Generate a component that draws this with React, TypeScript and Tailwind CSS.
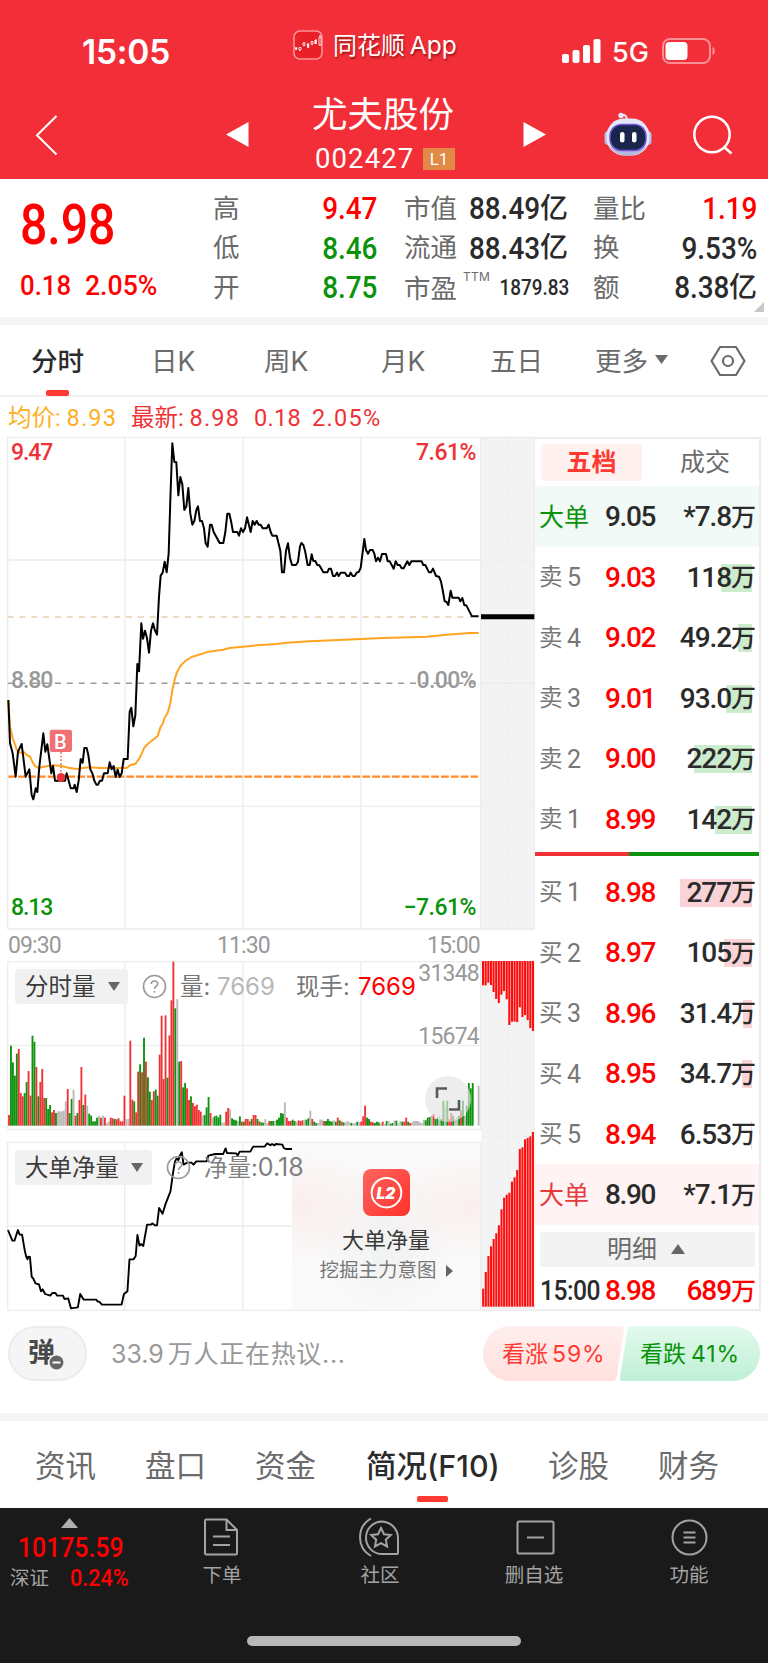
import { clsx } from 'clsx';

const PRICE_LINE =
  '25,810 27,860 30,940 38,970 47,1040 54,965 65,942 77,1040 88,1018 95,1095 100,1108 107,1075 112,1086 118,1010 130,910 136,965 142,943 154,1030 159,1008 165,1052 195,1052 200,1030 212,1075 221,1075 224,1064 230,1086 236,1052 242,987 248,998 253,954 260,954 265,975 271,1018 277,1030 283,1052 289,1064 294,1064 300,1052 306,1052 312,1030 323,1030 329,997 335,1018 341,1008 347,1041 353,1019 359,1041 365,1030 371,987 383,987 389,845 394,833 400,889 406,856 412,702 417,724 424,580 429,626 435,602 441,624 447,668 453,602 459,580 465,602 471,614 477,500 482,437 488,428 494,395 500,427 506,370 512,180 517,40 523,96 529,97 535,196 541,141 547,163 553,240 559,229 565,174 571,251 577,284 583,273 589,240 594,229 600,273 606,273 612,295 617,340 623,350 630,284 635,284 641,306 659,339 670,339 676,306 682,251 688,251 693,273 699,306 712,306 717,317 723,295 729,306 735,295 741,262 752,306 758,273 764,284 770,273 776,284 782,284 788,295 800,295 806,284 812,306 817,317 830,317 841,362 846,427 852,427 858,362 864,340 870,384 876,405 888,405 894,395 900,349 904,339 910,345 915,362 923,405 929,405 935,373 940,393 946,393 952,405 958,406 970,427 982,427 987,416 993,416 999,438 1005,438 1011,428 1016,438 1022,428 1035,428 1041,438 1047,438 1052,428 1058,438 1064,438 1070,428 1076,426 1082,414 1093,327 1098,360 1104,371 1110,360 1118,360 1123,371 1128,394 1134,383 1140,394 1146,372 1158,372 1163,394 1169,394 1181,416 1187,394 1193,405 1199,405 1205,415 1211,415 1222,394 1228,405 1234,394 1265,394 1270,405 1276,405 1287,427 1293,427 1299,416 1308,438 1317,440 1323,455 1328,480 1334,514 1339,515 1345,525 1352,482 1357,503 1376,503 1381,514 1387,504 1393,526 1399,526 1416,559 1436,559';

const AVG_LINE =
  '25,810 30,890 38,925 46,945 50,960 60,968 73,967 80,975 90,980 98,997 105,1008 115,1014 130,1010 160,1006 185,1008 205,1013 230,1017 265,1012 300,1014 380,1014 390,1006 407,1001 420,982 433,953 442,943 465,925 473,918 482,890 488,882 494,863 503,848 511,820 518,775 524,750 530,728 542,707 556,693 575,681 610,670 625,665 670,659 688,654 730,650 770,646 830,642 860,638 930,634 1083,627 1150,624 1280,620 1340,614 1410,609 1436,609';

const NET_LINE =
  '23,300 36,332 42,332 52,300 57,314 64,314 72,362 76,380 80,388 82,380 87,381 92,440 98,448 103,460 113,463 119,484 124,478 131,492 146,497 152,489 161,489 166,497 183,497 187,507 198,505 206,535 226,532 233,492 243,509 279,509 284,515 288,515 296,524 353,524 360,492 370,484 376,388 388,388 394,378 399,315 405,347 409,342 416,348 427,284 438,284 443,280 450,286 456,286 462,234 472,251 480,224 495,184 503,125 508,95 513,85 518,90 523,75 528,67 533,104 543,98 556,98 562,104 570,94 600,94 605,77 625,72 648,72 655,55 659,69 686,70 690,77 696,65 727,65 735,50 768,50 776,40 785,46 790,42 797,46 801,42 820,44 824,54 830,57 848,57';

// one entry per minute: r = up, g = down, a = flat, followed by the bar height
const VOLUME =
  'r32 g240 g190 g150 g216 r230 r98 r88 g98 g131 r164 r90 g270 g252 r176 g88 r131 r170 r83 g83 g50 g62 r40 r47 g38 a43 a43 a43 a45 a73 r110 g38 g80 a108 r30 g38 r77 r176 g62 r93 a60 g36 g30 g13 g13 g24 a30 r24 a30 r24 a8 a13 r24 r22 g20 r19 r22 r13 r13 r90 a20 a20 r255 r78 g73 r40 r162 g184 r160 g264 r192 g145 g102 r77 r103 g108 g90 r213 r330 r140 r331 g144 r271 r376 r492 g352 a380 g192 r194 g115 g128 r112 r77 g88 r68 r58 r63 r47 r42 a30 g32 g55 g86 r38 a24 g28 g30 g25 g33 a8 a10 r42 r53 a50 g22 g18 g16 a14 g28 r12 g12 r20 r20 r13 g20 r32 r32 g20 r13 g10 g9 a20 a8 r14 g14 g14 a14 g18 g24 g38 g36 a70 r24 r14 r14 g18 g14 a12 r16 r14 r16 a18 g18 g22 a45 r20 g12 g8 a8 a18 a18 r14 g14 g20 g14 g12 a16 g12 r24 g16 r12 g10 a10 a14 a10 g8 a8 a8 g12 a10 r12 r28 r60 g24 g20 r12 r10 g8 g12 g10 a6 r12 a5 g14 a14 g6 g8 a15 g15 a6 a14 g12 r12 r24 g12 r8 a10 a14 a14 a14 a10 a8 a18 g16 g24 g26 a30 r35 g20 g24 a30 g20 g75 a60 g75 r20 r38 g30 a20 a25 g30 r45 g75 a30 g60 g128 g112 g128 a0 a0 a120';

const VOLUME_COLORS: Record<string, string> = { r: '#ee3236', g: '#0f930f', a: '#b9b9b9' };

const AUCTION_TOP = [256, 256, 248, 255, 276, 297, 309, 284, 273, 298, 375, 365, 365, 366, 322, 351, 345, 360, 384, 393];
const AUCTION_NET = [476, 426, 378, 349, 327, 310, 286, 238, 203, 194, 188, 155, 142, 120, 57, 52, 28, 24, 19, 6];

const SELLS = [
  { label: '卖', level: '5', price: '9.03', volume: '118', bar: 31 },
  { label: '卖', level: '4', price: '9.02', volume: '49.2', bar: 14 },
  { label: '卖', level: '3', price: '9.01', volume: '93.0', bar: 26 },
  { label: '卖', level: '2', price: '9.00', volume: '222', bar: 58 },
  { label: '卖', level: '1', price: '8.99', volume: '142', bar: 37 },
];

const BUYS = [
  { label: '买', level: '1', price: '8.98', volume: '277', bar: 72 },
  { label: '买', level: '2', price: '8.97', volume: '105', bar: 28 },
  { label: '买', level: '3', price: '8.96', volume: '31.4', bar: 9 },
  { label: '买', level: '4', price: '8.95', volume: '34.7', bar: 10 },
  { label: '买', level: '5', price: '8.94', volume: '6.53', bar: 1.5 },
];

type Level = (typeof SELLS)[number];

function Header() {
  return (
    <header className="h-[179px] bg-[#f22f38] text-white">
      {/* Status bar */}
      <div className="flex h-[89px] items-start">
        <div className="ml-[82px] mt-[34px] w-[211px] text-[33.500px] font-semibold leading-[36px] tracking-[-0.2px]">15:05</div>
        <svg className="mt-[30px] h-[30px] w-[30px]" viewBox="0 0 30 30" fill="none">
          <rect x="1" y="1" width="28" height="28" rx="6" fill="#ea2029" stroke="#fa9498" strokeWidth="1.6" />
          <path d="M3 17v3M6.800 17v4M11 12v4M15 13v5M19 11v4M23 9v5M27 5v11" stroke="white" strokeWidth="1" />
          <path d="M2.200 17.500h2v2h-2zM14 14h2.200v3.500H14zM21.500 10h2v4h-2z" fill="white" />
          <path d="M6 17.500h2v2.500H6zM10 13h2v2.500h-2zM18 11.500h2v2.500h-2zM26 7h2v8h-2z" fill="#ea2029" stroke="white" strokeWidth=".8" />
        </svg>
        <div className="ml-[10px] mt-[30px] w-[228px] shrink-0 whitespace-nowrap text-[24px] leading-[31px] [text-shadow:1px_2px_2px_rgba(90,0,0,0.55)]">
          同花顺 <span className="-ml-[2px] text-[24.500px]">App</span>
        </div>
        <svg className="mt-[38px] h-[26px] w-[40px] shrink-0" viewBox="0 0 40 26" fill="white">
          <rect x="1" y="16" width="7" height="9" rx="2" />
          <rect x="11.500" y="12" width="7" height="13" rx="2" />
          <rect x="22" y="7" width="7" height="18" rx="2" />
          <rect x="32.500" y="1" width="7" height="24" rx="2" />
        </svg>
        <div className="ml-[11px] mt-[39px] w-[50px] shrink-0 text-[27px] font-medium leading-[28px]">5G</div>
        <svg className="mt-[38px] h-[26px] w-[54px] shrink-0" viewBox="0 0 54 26" fill="none">
          <rect x="1" y="1" width="47" height="24" rx="7" stroke="#fa8f94" strokeWidth="2" />
          <rect x="3.500" y="4" width="22" height="18" rx="4" fill="white" />
          <path d="M50.500 9c3 1 3 7 0 8z" fill="#fa8f94" />
        </svg>
      </div>

      {/* Stock title */}
      <div className="flex h-[90px] items-start">
        <svg className="ml-[35px] mt-[26px] h-[40px] w-[23px]" viewBox="0 0 23 40" fill="none">
          <path d="M21.500 1 2 20.300 21.500 39.500" stroke="white" strokeWidth="2" />
        </svg>
        <svg className="ml-[167px] mt-[33px] h-[25px] w-[24px]" viewBox="0 0 24 25">
          <path d="M23.500 0v25L1 12.500z" fill="white" />
        </svg>
        <div className="ml-[63px] flex w-[144px] flex-col">
          <h1 className="mt-[7px] whitespace-nowrap text-[35.500px] font-normal leading-[38px]">尤夫股份</h1>
          <div className="mt-[11px] flex items-center">
            <span className="ml-[3px] w-[108px] font-[Roboto] text-[27.500px] leading-[28px] tracking-[1.1px]">002427</span>
            <span className="h-[22px] w-[32px] bg-[#e08a45] text-center font-[Roboto] text-[17px] leading-[22px]">L1</span>
          </div>
        </div>
        <svg className="ml-[67px] mt-[33px] h-[25px] w-[24px]" viewBox="0 0 24 25">
          <path d="M.500 0v25L23 12.500z" fill="white" />
        </svg>
        <svg className="ml-[57px] mt-[23px] h-[45px] w-[48px]" viewBox="0 0 48 45" fill="none">
          <path d="M17.500 3.500c3-1.500 5 0 5.500 4" stroke="#e8eeff" strokeWidth="2" />
          <circle cx="17" cy="3.500" r="2.700" fill="#dfe6fb" />
          <rect x=".5" y="19" width="8" height="14" rx="4" fill="#b9bdec" />
          <rect x="39.500" y="19" width="8" height="14" rx="4" fill="#b9bdec" />
          <rect x="2.500" y="6.500" width="43" height="37" rx="17.500" fill="#e4e8fa" />
          <path d="M5 33c4 8 10 10.500 19 10.500S39 41 43 33c-6 5-32 5-38 0z" fill="#b3bade" />
          <rect x="6" y="12.500" width="36" height="26" rx="11.500" fill="#17264a" stroke="#7653d8" strokeWidth="1.500" />
          <rect x="16" y="20" width="4.500" height="10.500" rx="2.200" fill="white" />
          <rect x="28" y="20" width="4.500" height="10.500" rx="2.200" fill="white" />
        </svg>
        <svg className="ml-[40px] mt-[26px] h-[42px] w-[42px]" viewBox="0 0 42 42" fill="none" stroke="white" strokeWidth="2.500">
          <circle cx="20" cy="19.500" r="17.700" />
          <path d="m32 32 7.500 6.500" />
        </svg>
      </div>
    </header>
  );
}

function StatRow({ label, value, unit, className }: { label: string; value: string; unit?: string; className?: string }) {
  return (
    <div className="flex h-[39.500px] items-center justify-between">
      <span className="text-[26.500px] leading-none text-[#6b6b6b]">{label}</span>
      <span className={clsx('flex items-center whitespace-nowrap font-medium leading-none', className)}>
        <span className="origin-right scale-x-[0.9]">{value}</span>
        {unit && <span className="text-[28px]">{unit}</span>}
      </span>
    </div>
  );
}

function Quote() {
  return (
    <section className="relative flex h-[138px] border-b border-white bg-white font-[Roboto,'Noto_Sans_CJK_SC',sans-serif] text-[31px] text-[#2b2b2b]">
      <div className="w-[213px] pl-[20px] text-[#ff0000]">
        <div className="mt-[18px] origin-left scale-x-[0.86] text-[56px] font-medium leading-[56px]">8.98</div>
        <div className="mt-[17px] flex text-[28px] font-medium leading-[32px]">
          <span className="w-[65px] origin-left scale-x-[0.92]">0.18</span>
          <span className="origin-left scale-x-[0.95]">2.05%</span>
        </div>
      </div>
      <div className="w-[164px] pt-[10px]">
        <StatRow label="高" value="9.47" className="text-[#ff0000]" />
        <StatRow label="低" value="8.46" className="text-[#0a930a]" />
        <StatRow label="开" value="8.75" className="text-[#0a930a]" />
      </div>
      <div className="ml-[27px] w-[164px] pt-[10px]">
        <StatRow label="市值" value="88.49" unit="亿" />
        <StatRow label="流通" value="88.43" unit="亿" />
        <div className="flex h-[40px] items-center whitespace-nowrap">
          <span className="mt-[3px] shrink-0 text-[26.500px] leading-none text-[#6b6b6b]">市盈</span>
          <span className="mb-[22px] ml-[6px] shrink-0 font-[Inter] text-[12px] leading-none tracking-[0.3px] text-[#6b6b6b]">TTM</span>
          <span className="ml-auto origin-right scale-x-[0.88] text-[21.500px] font-medium leading-none">1879.83</span>
        </div>
      </div>
      <div className="ml-[25px] w-[164px] pt-[10px]">
        <StatRow label="量比" value="1.19" className="text-[#ff0000]" />
        <StatRow label="换" value="9.53%" />
        <StatRow label="额" value="8.38" unit="亿" />
      </div>
      <svg className="absolute bottom-[4px] right-[4px] h-[10px] w-[10px]" viewBox="0 0 10 10">
        <path d="M10 0v10H0z" fill="#c8c8c8" />
      </svg>
    </section>
  );
}

function PeriodTabs() {
  return (
    <nav className="relative flex h-[72px] items-center border-b-2 border-[#f1f1f1] pt-[2px] text-[26.500px] leading-none text-[#6b6b6b]">
      <span className="ml-[31px] w-[120px] font-medium text-[#2b2b2b]">分时</span>
      <span className="w-[113px]">日K</span>
      <span className="w-[117px]">周K</span>
      <span className="w-[109px]">月K</span>
      <span className="w-[105px]">五日</span>
      <span className="w-[60px]">更多</span>
      <svg className="mt-[-3px] h-[9px] w-[13px]" viewBox="0 0 13 9">
        <path d="M0 0h13L6.500 9z" fill="#6b6b6b" />
      </svg>
      <svg className="mt-[-1px] ml-[42px] h-[32px] w-[36px]" viewBox="0 0 36 32" fill="none" stroke="#6b6b6b" strokeWidth="2.200">
        <path d="M10 2h16l8.500 14L26 30H10L1.500 16z" strokeLinejoin="round" />
        <circle cx="18" cy="16" r="5" />
      </svg>
      <div className="absolute bottom-[-1px] left-[46px] h-[6px] w-[23px] rounded-[2px] bg-[#ff3a33]" />
    </nav>
  );
}

function PriceChart() {
  return (
    <div className="relative h-[500px] font-[Roboto] text-[23px] font-medium leading-none">
      <svg className="h-full w-full" viewBox="0 0 1605 1500" fill="none">
        <rect x="1443" y="22" width="162" height="1476" fill="#f3f3f4" />
        <g stroke="#ececec" strokeWidth="4">
          <path d="M23 22H1605M23 390H1443M23 1129H1443M23 1497H1605" />
          <path d="M23 22V1497M375 22V1497M729 22V1497M1083 22V1497M1442 22V1497M1603 22V1497" />
        </g>
        <g stroke="#e8e8e8" strokeWidth="3">
          <path d="M1526 22V1497M1443 392H1603M1443 1131H1603" strokeDasharray="3 6" />
          <path d="M1443 760H1603" />
        </g>
        <path d="M23 561H1416" stroke="#e6cfb0" strokeWidth="4.500" strokeDasharray="18 17.500" />
        <path d="M23 760H1436" stroke="#9a9a9a" strokeWidth="4.500" strokeDasharray="18 17.500" />
        <path d="M25 1040H1434" stroke="#ff8a2b" strokeWidth="7" strokeDasharray="23.500 6" />
        <polyline points={AVG_LINE} stroke="#ffa41f" strokeWidth="6" strokeLinejoin="round" />
        <polyline points={PRICE_LINE} stroke="black" strokeWidth="6" strokeLinejoin="round" />
        <path d="M1443 560H1603" stroke="black" strokeWidth="15" />
        <path d="M183 966V1030" stroke="#f17074" strokeWidth="5" strokeDasharray="5 6" />
        <circle cx="183" cy="1042" r="13" fill="#ee3338" />
        <rect x="149" y="899" width="67" height="67" rx="7" fill="#f17074" />
      </svg>
      <span className="absolute left-[54px] top-[302px] text-[20px] text-white">B</span>
      <span className="absolute left-[11px] top-[11px] tracking-[-1.100px] text-[#ee3236]">9.47</span>
      <span className="absolute left-[11px] top-[239px] tracking-[-1.100px] text-[#999]">8.80</span>
      <span className="absolute left-[11px] top-[466px] tracking-[-1.100px] text-[#0a930a]">8.13</span>
      <span className="absolute right-[59px] top-[11px] tracking-[-0.500px] text-[#ee3236]">7.61%</span>
      <span className="absolute right-[59px] top-[239px] tracking-[-0.600px] text-[#999]">0.00%</span>
      <span className="absolute right-[59px] top-[466px] tracking-[-0.500px] text-[#0a930a]">−7.61%</span>
    </div>
  );
}

function HelpIcon({ className }: { className?: string }) {
  return (
    <svg className={clsx('h-[25px] w-[25px]', className)} viewBox="0 0 25 25" fill="none" stroke="#999" strokeWidth="1.600">
      <circle cx="12.500" cy="12.500" r="11" />
      <path d="M9.300 10c0-4 6.500-4 6.500-.3 0 2.300-3.300 2.500-3.300 5.300M12.500 17v1.800" />
    </svg>
  );
}

function IndicatorPicker({ label, className }: { label: string; className?: string }) {
  return (
    <div className={clsx('flex h-[35px] items-center rounded-[4px] bg-[#f1f1f2] pl-[10px] text-[#3c3c3c]', className)}>
      <span className="mt-[1px]">{label}</span>
      <svg className="ml-[12px] h-[9px] w-[12px]" viewBox="0 0 12 9">
        <path d="M0 0h12L6 9z" fill="#666" />
      </svg>
    </div>
  );
}

function VolumeChart() {
  const bars = VOLUME.split(' ');
  return (
    <div className="relative h-[169px] text-[23.500px] leading-none">
      <svg className="absolute inset-0 h-full w-full" viewBox="0 183 1605 507" fill="none">
        <rect x="1443" y="183" width="162" height="510" fill="#f3f3f4" />
        <path d="M1526 183V690" stroke="#e8e8e8" strokeWidth="3" strokeDasharray="3 6" />
        <g stroke="#ececec" strokeWidth="4">
          <path d="M23 185H1443M23 436H1443M23 688H1443" />
          <path d="M23 185V688M375 185V688M729 185V688M1083 185V688M1442 185V688" />
        </g>
        {bars.map((bar, i) => {
          const height = Number(bar.slice(1));
          return <rect key={i} x={24.2 + i * 5.87} y={677 - height} width="5.6" height={height} fill={VOLUME_COLORS[bar[0]]} />;
        })}
        {AUCTION_TOP.map((bottom, i) => (
          <rect key={i} x={1446 + i * 7.88} y="183" width="6.300" height={bottom - 183} fill="#ff0d0d" />
        ))}
      </svg>
      <div className="relative flex h-[51px] items-center">
        <IndicatorPicker label="分时量" className="ml-[15px] w-[113px]" />
        <HelpIcon className="ml-[14px]" />
        <span className="ml-[13px] w-[37px] text-[#777]">量:</span>
        <span className="w-[79px] font-[Inter] text-[24px] text-[#b8b8b8]">7669</span>
        <span className="w-[62px] whitespace-nowrap text-[#777]">现手:</span>
        <span className="font-[Inter] text-[24px] text-[#ff0000]">7669</span>
      </div>
      <span className="absolute right-[56px] top-[1px] font-[Roboto] text-[23px] tracking-[-0.800px] text-[#999]">31348</span>
      <span className="absolute right-[56px] top-[64px] font-[Roboto] text-[23px] tracking-[-0.800px] text-[#999]">15674</span>
      <svg className="absolute left-[425px] top-[115px] h-[46px] w-[46px]" viewBox="0 0 46 46" fill="none">
        <circle cx="23" cy="23" r="23" fill="#e3e3e3" fillOpacity=".65" />
        <path d="M12 22V12.500h10M34 24v9.500H24" stroke="#5a5a5a" strokeWidth="2.600" />
      </svg>
    </div>
  );
}

function NetChart() {
  return (
    <div className="relative h-[181px] text-[23.500px] leading-none">
      <svg className="absolute inset-0 h-[181px] w-[540px] max-w-none" viewBox="0 0 1568 543" preserveAspectRatio="none" fill="none">
        <rect x="1397" width="157" height="543" fill="#f3f3f4" />
        <path d="M1478 0V540M1397 20H1553" stroke="#e6e6e6" strokeWidth="3" strokeDasharray="3 6" />
        <g stroke="#ececec" strokeWidth="4">
          <path d="M21 37H1396M21 288H1396M21 541H1554" />
          <path d="M22 37V541M362 37V541M705 37V541M1396 37V541" />
        </g>
        <polyline points={NET_LINE} stroke="black" strokeWidth="5.500" strokeLinejoin="round" />
        {AUCTION_NET.map((top, i) => (
          <rect key={i} x={1400 + i * 7.6} y={top} width="6" height={530 - top} fill="#ff0d0d" />
        ))}
      </svg>
      {/* Level-2 promo */}
      <div className="absolute left-[292px] top-[13px] flex h-[166px] w-[188px] flex-col items-center bg-[radial-gradient(ellipse_at_0%_38%,#fbeeee_0%,transparent_42%),radial-gradient(ellipse_at_95%_38%,#fbefef_0%,transparent_38%),radial-gradient(ellipse_at_50%_60%,#eff2f0_0%,transparent_55%)] bg-[#fafafa]">
        <svg className="mt-[26px] h-[47px] w-[47px]" viewBox="0 0 47 47" fill="none">
          <defs>
            <linearGradient id="badge" x1="0" y1="0" x2="1" y2="1">
              <stop stopColor="#ff6661" />
              <stop offset="1" stopColor="#fc3129" />
            </linearGradient>
          </defs>
          <rect width="47" height="47" rx="8" fill="url(#badge)" />
          <circle cx="23.500" cy="23.700" r="14.800" stroke="white" strokeWidth="2" />
          <text x="23" y="29.500" textAnchor="middle" fill="white" fontFamily="Inter" fontSize="15.500" fontWeight="900" fontStyle="italic">
            L2
          </text>
        </svg>
        <span className="mt-[13px] text-[22px] text-[#3a3a3a]">大单净量</span>
        <div className="mt-[10px] flex items-center text-[19.500px] text-[#777]">
          挖掘主力意图
          <svg className="ml-[9px] h-[12px] w-[7px]" viewBox="0 0 7 12">
            <path d="M0 0v12l7-6z" fill="#666" />
          </svg>
        </div>
      </div>
      <div className="relative flex h-[75px] items-center">
        <IndicatorPicker label="大单净量" className="ml-[15px] w-[137px]" />
        <HelpIcon className="ml-[14px]" />
        <span className="ml-[13px] whitespace-nowrap text-[#808080]">
          净量:<span className="font-[Inter] text-[25px]">0.18</span>
        </span>
      </div>
    </div>
  );
}

function LevelRow({ row, barClass }: { row: Level; barClass: string }) {
  return (
    <div className="relative flex h-[60.5px] shrink-0 items-center pt-[2px] leading-none">
      <div className={clsx('absolute right-[7px] h-[28px]', barClass)} style={{ width: row.bar }} />
      <span className="ml-[4px] w-[28px] text-[23.500px] text-[#777]">{row.label}</span>
      <span className="w-[38px] text-[25px] text-[#777]">{row.level}</span>
      <span className="text-[28px] font-medium tracking-[-1.4px] text-[#ff0000]">{row.price}</span>
      <Volume value={row.volume} />
    </div>
  );
}

function Volume({ value, className }: { value: string; className?: string }) {
  return (
    <span className={clsx('relative ml-auto mr-[3px] flex items-center font-medium', className)}>
      <span className="text-[28px] tracking-[-1.1px]">{value}</span>
      <span className="text-[25px]">万</span>
    </span>
  );
}

function OrderBook() {
  return (
    <div className="mt-[7px] flex h-[874px] w-[226px] flex-col border-2 border-l-0 border-[#ececec] font-[Roboto,'Noto_Sans_CJK_SC',sans-serif] text-[#2b2b2b]">
      <div className="flex h-[47px] shrink-0 items-center text-[25px] leading-none">
        <div className="mb-[1px] ml-[6px] flex h-[37px] w-[101px] items-center justify-center rounded-[4px] bg-[#fff1f0] font-bold text-[#ff3a33]">
          五档
        </div>
        <div className="ml-[38px] text-[#6b6b6b]">成交</div>
      </div>
      <div className="flex h-[60.5px] shrink-0 items-center bg-[#f1faf6] pt-[2px] leading-none">
        <span className="ml-[4px] w-[66px] text-[25px] text-[#0a930a]">大单</span>
        <span className="text-[28px] font-medium tracking-[-1.4px]">9.05</span>
        <Volume value="*7.8" />
      </div>
      {SELLS.map((row) => (
        <LevelRow key={row.price} row={row} barClass="bg-[#cdebcd]" />
      ))}
      <div className="flex h-[12.5px] shrink-0 pt-[3px]">
        <div className="h-[4px] w-[94px] bg-[#f03236]" />
        <div className="h-[4px] flex-1 bg-[#0f930f]" />
      </div>
      {BUYS.map((row) => (
        <LevelRow key={row.price} row={row} barClass="bg-[#fad3d6]" />
      ))}
      <div className="flex h-[60.5px] shrink-0 items-center bg-[#fff3f3] pt-[2px] leading-none">
        <span className="ml-[4px] w-[66px] text-[25px] text-[#e63a3c]">大单</span>
        <span className="text-[28px] font-medium tracking-[-1.4px]">8.90</span>
        <Volume value="*7.1" />
      </div>
      <div className="ml-[5px] mt-[7px] flex h-[35px] w-[215px] shrink-0 items-center bg-[#f3f3f3] pl-[67px] text-[25px] leading-none text-[#6b6b6b]">
        明细
        <svg className="ml-[14px] h-[10px] w-[14px]" viewBox="0 0 14 10">
          <path d="M0 10h14L7 0z" fill="#666" />
        </svg>
      </div>
      <div className="flex flex-1 items-center pt-[7px] leading-none">
        <span className="ml-[5px] w-[65px] origin-left scale-x-[0.88] whitespace-nowrap text-[28px] font-medium tracking-[-0.6px]">15:00</span>
        <span className="text-[28px] font-medium tracking-[-1.4px] text-[#ff0000]">8.98</span>
        <Volume value="689" className="text-[#ff0000]" />
      </div>
    </div>
  );
}

function Discussion() {
  return (
    <section className="flex h-[102px] items-start pt-[15px] leading-none">
      <div className="relative ml-[8px] flex h-[55px] w-[79px] items-center rounded-full border-2 border-[#ececec] bg-[#f5f5f5] pl-[18px] text-[27px] font-bold text-[#4a4a4a]">
        <span className="mb-[2px]">弹</span>
        <svg className="absolute left-[38px] top-[26px] h-[17px] w-[17px]" viewBox="0 0 17 17">
          <circle cx="8.500" cy="8.500" r="7.700" fill="#666" stroke="#f5f5f5" strokeWidth="1.500" />
          <path d="M4.500 8.500h8" stroke="white" strokeWidth="2" />
        </svg>
      </div>
      <span className="ml-[24px] mt-[16px] w-[372px] whitespace-nowrap text-[25px] text-[#999]">
        33.9<span className="ml-[4px] tracking-[0.7px]">万人正在热议...</span>
      </span>
      <div className="relative h-[55px] w-[277px]">
        <svg className="absolute inset-0 h-full w-full" viewBox="0 0 277 55">
          <defs>
            <linearGradient id="up" x1="0" y1="0" x2="0" y2="1">
              <stop stopColor="#ffefee" />
              <stop offset="1" stopColor="#ffe0dd" />
            </linearGradient>
            <linearGradient id="down" x1="0" y1="0" x2="0" y2="1">
              <stop stopColor="#e2faed" />
              <stop offset="1" stopColor="#bfefd6" />
            </linearGradient>
          </defs>
          <path d="M27.500 0H138q3.500 0 3 4l-7.500 47.500q-.5 3.500-4 3.500H27.500a27.500 27.500 0 0 1 0-55z" fill="url(#up)" />
          <path d="M149 0h100.500a27.500 27.500 0 0 1 0 55H140q-3.500 0-3-4L144.500 3.500Q145 0 149 0z" fill="url(#down)" />
        </svg>
        <div className="relative flex h-full items-center whitespace-nowrap pt-[2px] text-[23px]">
          <span className="ml-[19px] w-[138px] text-[#ff3a33]">
            看涨<span className="ml-[4px] tracking-[0.9px]">59%</span>
          </span>
          <span className="text-[#0a930a]">
            看跌<span className="ml-[5px] tracking-[0.9px]">41%</span>
          </span>
        </div>
      </div>
    </section>
  );
}

function InfoTabs() {
  return (
    <nav className="relative flex h-[87px] items-center whitespace-nowrap pt-[3px] text-[30.500px] leading-none text-[#6b6b6b]">
      <span className="ml-[35px] w-[110px]">资讯</span>
      <span className="w-[110px]">盘口</span>
      <span className="w-[111px]">资金</span>
      <span className="w-[182px] font-medium text-[#2b2b2b]">简况(F10)</span>
      <span className="w-[110px]">诊股</span>
      <span>财务</span>
      <div className="absolute left-[417px] top-[75px] h-[6px] w-[31px] rounded-[2px] bg-[#ff3a33]" />
    </nav>
  );
}

function BottomBar() {
  return (
    <footer className="relative flex h-[155px] items-start bg-[#1a1a1a] text-[19.500px] leading-none text-[#a3a3a3]">
      <div className="flex w-[140px] flex-col">
        <svg className="ml-[61px] mt-[10px] h-[10px] w-[17px]" viewBox="0 0 17 10">
          <path d="M0 10h17L8.500 0z" fill="#b0b0b0" />
        </svg>
        <span className="ml-[18px] mt-[6px] origin-left scale-x-[0.87] font-[Roboto] text-[28.500px] font-medium leading-[28px] text-[#ff0000]">10175.59</span>
        <div className="mt-[5px] flex items-center">
          <span className="ml-[10px] w-[60px]">深证</span>
          <span className="origin-left scale-x-[0.94] font-[Roboto] text-[23px] font-medium text-[#ff0000]">0.24%</span>
        </div>
      </div>
      <div className="ml-[60px] flex w-[44px] flex-col items-center">
        <svg className="mr-[2px] mt-[10px] h-[38px] w-[36px]" viewBox="0 0 36 38" fill="none" stroke="#a3a3a3" strokeWidth="2">
          <path d="M3 1.500h20.500L34 12v23q0 1.500-1.500 1.500h-29Q2 36.500 2 35V3q0-1.500 1-1.500z" />
          <path d="M23.500 1.500V12H34M10 18.500h17M10 27h17" />
        </svg>
        <span className="mt-[10px]">下单</span>
      </div>
      <div className="ml-[113px] flex w-[44px] flex-col items-center">
        <svg className="mr-[3px] mt-[9px] h-[40px] w-[42px]" viewBox="0 0 42 40" fill="none" stroke="#a3a3a3" strokeWidth="2">
          <path d="M24 4.500c9.500 0 17 7 17 16.500v15q0 1-1 1H24a16.300 16.300 0 0 1 0-32.500z" />
          <path d="M14 1.500a21.500 21.500 0 0 0 0 37.500" />
          <path d="m24 11 3 6.200 6.800.8-5 4.700 1.300 6.800-6.100-3.300-6.100 3.300 1.300-6.800-5-4.700 6.800-.8z" />
        </svg>
        <span className="ml-[2px] mt-[9px]">社区</span>
      </div>
      <div className="ml-[101px] flex w-[64px] flex-col items-center">
        <svg className="ml-[3px] mt-[12px] h-[35px] w-[39px]" viewBox="0 0 39 35" fill="none" stroke="#a3a3a3" strokeWidth="2">
          <rect x="1.500" y="1.500" width="36" height="32" rx="1.500" />
          <path d="M11 17.500h17" />
        </svg>
        <span className="mt-[11px]">删自选</span>
      </div>
      <div className="ml-[101px] flex w-[44px] flex-col items-center">
        <svg className="mt-[11px] h-[37px] w-[37px]" viewBox="0 0 37 37" fill="none" stroke="#a3a3a3" strokeWidth="2">
          <circle cx="18.500" cy="18.500" r="17" />
          <path d="M12.500 13.500h12M12.500 18.500h12M12.500 23.500h12" />
        </svg>
        <span className="mt-[10px]">功能</span>
      </div>
      <div className="absolute left-[247px] top-[128px] h-[10px] w-[274px] rounded-full bg-[#b8b8b8]" />
    </footer>
  );
}

export default function App() {
  return (
    <div className="w-[768px] overflow-hidden bg-white font-[Inter,'Noto_Sans_CJK_SC',sans-serif]">
      <Header />
      <Quote />
      <div className="h-[8px] bg-[#f4f4f4]" />
      <PeriodTabs />

      {/* Legend */}
      <div className="flex h-[33px] items-center whitespace-nowrap pt-[11px] font-[Roboto,'Noto_Sans_CJK_SC',sans-serif] text-[23.500px] leading-none text-[#ee3236]">
        <span className="ml-[8px] w-[123px] text-[#fdb022]">
          均价: <span className="tracking-[1.2px]">8.93</span>
        </span>
        <span className="w-[123px]">
          最新: <span className="tracking-[1.2px]">8.98</span>
        </span>
        <span className="w-[58px] tracking-[0.3px]">0.18</span>
        <span className="tracking-[1.300px]">2.05%</span>
      </div>

      <main className="flex h-[881px]">
        <div className="w-[535px] shrink-0">
          <PriceChart />
          <div className="flex h-[31px] items-center font-[Roboto] text-[23px] leading-none tracking-[-0.900px] text-[#999]">
            <span className="ml-[8px] w-[209px]">09:30</span>
            <span className="w-[210px]">11:30</span>
            <span>15:00</span>
          </div>
          <VolumeChart />
          <NetChart />
        </div>
        <OrderBook />
      </main>

      <Discussion />
      <div className="h-[8px] bg-[#f4f4f4]" />
      <InfoTabs />
      <BottomBar />
    </div>
  );
}
